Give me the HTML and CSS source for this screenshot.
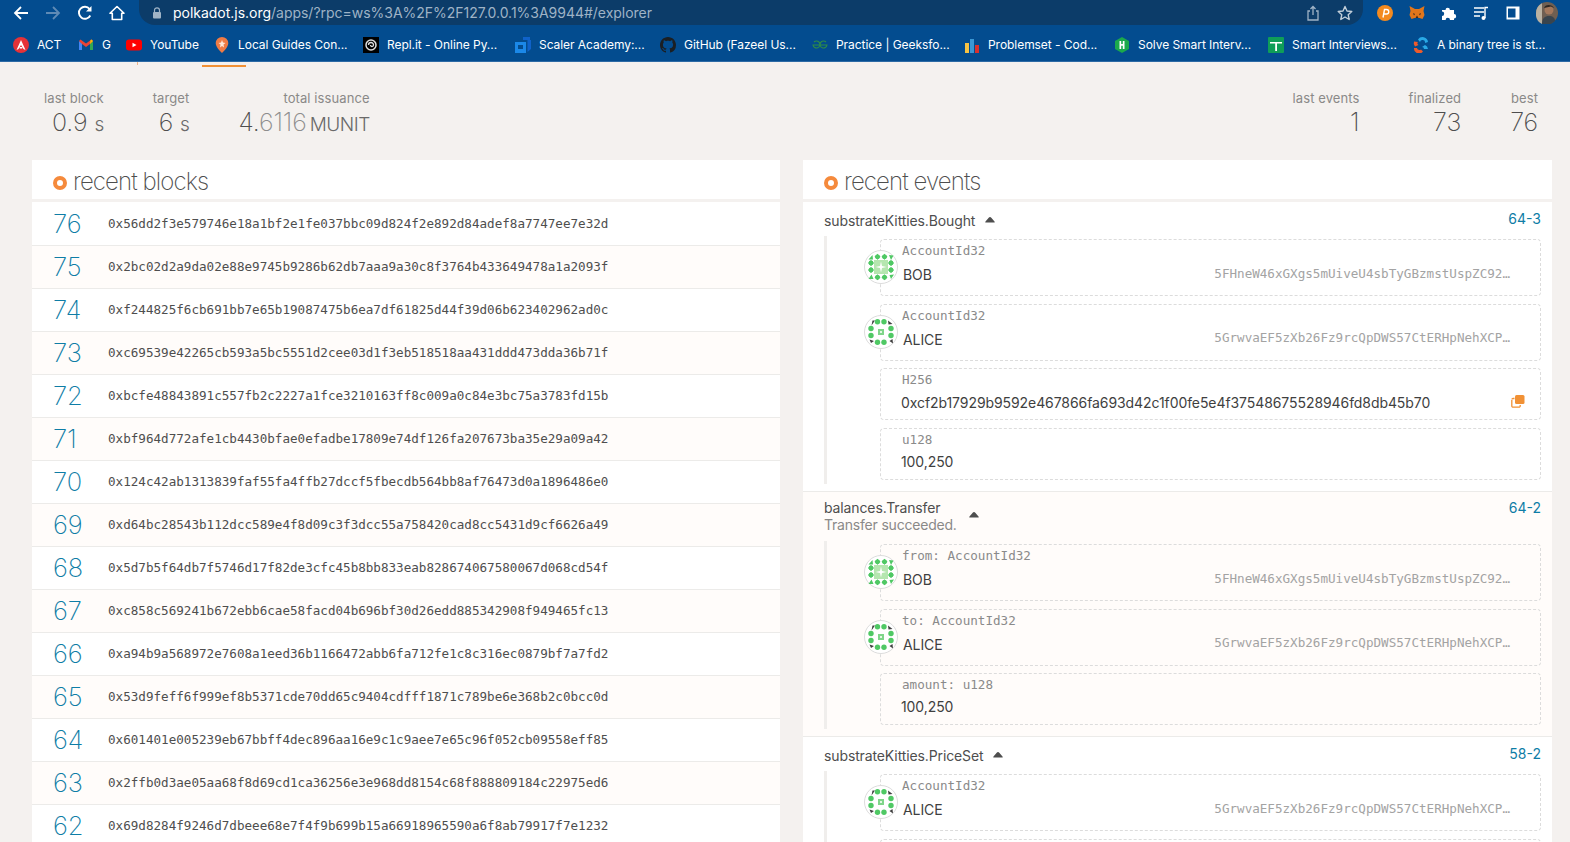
FILE: index.html
```html
<!DOCTYPE html>
<html lang="en">
<head>
<meta charset="utf-8">
<title>Polkadot/Substrate Portal</title>
<link rel="stylesheet" href="styles.css">
</head>
<body>
<svg class="defs" width="0" height="0" aria-hidden="true">
  <symbol id="bob" viewBox="0 0 34 34">
    <circle cx="17" cy="17" r="16.5" fill="#fff" stroke="#dcdcdc"/>
    <rect x="10" y="10" width="14" height="14" fill="#b5e6b0"/>
    <path d="M17 11.500l1 4.500 4.500 1-4.500 1-1 4.500-1-4.500-4.500-1 4.500-1z" fill="#fff"/>
    <g fill="#4fc864">
      <path d="M13.500 3.800l3 3-3 3-3-3zM20.500 3.800l3 3-3 3-3-3zM7 10l3 3-3 3-3-3zM7 17l3 3-3 3-3-3zM27 10l3 3-3 3-3-3zM27 17l3 3-3 3-3-3zM13.500 24.300l3 3-3 3-3-3zM20.500 24.300l3 3-3 3-3-3z"/>
      <circle cx="13.500" cy="6.800" r="2.400"/><circle cx="20.500" cy="6.800" r="2.400"/><circle cx="7" cy="13" r="2.400"/><circle cx="7" cy="20" r="2.400"/><circle cx="27" cy="13" r="2.400"/><circle cx="27" cy="20" r="2.400"/><circle cx="13.500" cy="27.300" r="2.400"/><circle cx="20.500" cy="27.300" r="2.400"/>
      <path d="M4.500 9.500l4-4.500.5 4.500zM25 5l4.500.5-2.500 4.500zM25.500 25l4.500-.5-3 4.500zM4.500 29l3-4.500 2 4.500z"/>
    </g>
  </symbol>
  <symbol id="alice" viewBox="0 0 34 34">
    <circle cx="17" cy="17" r="16.500" fill="#fff" stroke="#dcdcdc"/>
    <g fill="#3f3f3f"><path d="M8.500 5.500h2.500L7.500 10.500zM24 5.500l4.500 3.500-4 .5zM5.500 24.500l4.500 1.500-3 2zM25.500 26l3-2 .5 4.500z"/></g>
    <g fill="#4fc864">
      <circle cx="13.500" cy="6.800" r="2.700"/><circle cx="20" cy="6.800" r="2.700"/><circle cx="7" cy="13.500" r="2.700"/><circle cx="7" cy="20.500" r="2.700"/><circle cx="27" cy="13.500" r="2.700"/><circle cx="27" cy="20.500" r="2.700"/><circle cx="13.500" cy="27.200" r="2.700"/><circle cx="20" cy="27.200" r="2.700"/>
    </g>
    <rect x="14" y="14" width="6" height="6" fill="#7fd68a"/>
    <rect x="16" y="16" width="2" height="2" fill="#e4f7e6"/>
  </symbol>
  <symbol id="caret" viewBox="0 0 10 6"><path d="M5 0c.5 0 .9.300 1.300.800L9.500 4.400c.5.600.3 1.100-.4 1.100H.9c-.7 0-.9-.5-.4-1.100L3.700.8C4.100.3 4.500 0 5 0z" fill="#4e4e4e"/></symbol>
</svg>

<header class="chrome">
  <div class="toolbar">
    <div class="nav-buttons">
      <svg class="tb-icon" viewBox="0 0 16 16"><path d="M15 8H2M8 2L2 8l6 6" fill="none" stroke="#fff" stroke-width="1.800"/></svg>
      <svg class="tb-icon" viewBox="0 0 16 16"><path d="M1 8h13M8 2l6 6-6 6" fill="none" stroke="#5f8ab5" stroke-width="1.800"/></svg>
      <svg class="tb-icon" viewBox="0 0 16 16"><path d="M13.300 10.500A6 6 0 1 1 12.600 4" fill="none" stroke="#fff" stroke-width="1.900"/><path d="M14.500 1v5.500H9z" fill="#fff"/></svg>
      <svg class="tb-icon" viewBox="0 0 16 16"><path d="M8 1.500L1 8.300h2.300V14.500h9.400V8.300H15z" fill="none" stroke="#fff" stroke-width="1.600" stroke-linejoin="round"/></svg>
    </div>
    <div class="omnibox">
      <svg class="lock" viewBox="0 0 10 12"><path d="M2.500 5V3.300a2.500 2.500 0 0 1 5 0V5" fill="none" stroke="#9fb3c6" stroke-width="1.200"/><rect x="1" y="5" width="8" height="6.500" rx="1" fill="#9fb3c6"/></svg>
      <span class="url"><b class="url-host">polkadot.js.org</b>/apps/?rpc=ws%3A%2F%2F127.0.0.1%3A9944#/explorer</span>
      <svg class="omni-icon share" viewBox="0 0 14 16"><path d="M4 6H2v9h10V6h-2M7 10V1.500M4.500 4L7 1.500 9.500 4" fill="none" stroke="#9fb3c6" stroke-width="1.300"/></svg>
      <svg class="omni-icon" viewBox="0 0 16 16"><path d="M8 1.500l2 4.500 4.800.5-3.600 3.200 1 4.800L8 12l-4.200 2.500 1-4.800L1.200 6.500 6 6z" fill="none" stroke="#c3cfda" stroke-width="1.400" stroke-linejoin="round"/></svg>
    </div>
    <div class="extensions">
      <svg class="ext" viewBox="0 0 16 16"><circle cx="8" cy="8" r="8" fill="#f38a1f"/><path d="M6 12.500L7.500 4.500h2a2 2 0 0 1 0 4.500H7" fill="none" stroke="#fff" stroke-width="1.400"/></svg>
      <svg class="ext" viewBox="0 0 16 16"><path d="M.5 1L6 4h4l5.500-3-1 5 1 4-2 4-3-1H5.500l-3 1-2-4 1-4z" fill="#e2761b"/><path d="M4 8l2 1-1 1.500zM12 8l-2 1 1 1.500zM6.500 13h3L8 10.500z" fill="#3d2b1f"/></svg>
      <svg class="ext" viewBox="0 0 16 16"><path d="M1 5h3.500a2.200 2.200 0 1 1 4.400 0H13v4a2.200 2.200 0 1 1 0 4.400V15H9a2.200 2.200 0 1 0-4.400 0H1v-4a2.200 2.200 0 1 0 0-4.400z" fill="#fff"/></svg>
      <svg class="ext" viewBox="0 0 16 16"><path d="M1 3h10M1 7h10M1 11h6" stroke="#fff" stroke-width="1.400"/><path d="M12 13V2.500h3" fill="none" stroke="#fff" stroke-width="1.400"/><circle cx="10.500" cy="13" r="2" fill="#fff"/></svg>
      <svg class="ext" viewBox="0 0 16 16"><rect x="1.500" y="1.500" width="13" height="13" fill="#fff"/><rect x="3" y="3.500" width="7.500" height="9" fill="#034c8f"/></svg>
      <svg class="ext avatar" viewBox="0 0 22 22"><circle cx="11" cy="11" r="11" fill="#6f5f52"/><path d="M0 11a11 11 0 0 1 6-9.700V22A11 11 0 0 1 0 11z" fill="#b9b1a2"/><circle cx="13" cy="8" r="4.500" fill="#a4785c"/><path d="M8 6c1-4 8-4 10 0l-3-1.500z" fill="#2c2621"/><path d="M6 22c0-6 3-8 7-8s6 2 6 5l-4 3z" fill="#39444d"/></svg>
    </div>
  </div>
  <nav class="bookmarks">
    <a class="bm"><svg class="fav" viewBox="0 0 16 16"><circle cx="8" cy="8" r="8" fill="#e53238"/><path d="M8 3L3.500 13l2-1L8 8l2.500 4 2 1zM6.800 10h2.400v1.500H6.800z" fill="#fff"/></svg>ACT</a>
    <a class="bm"><svg class="fav" viewBox="0 0 16 16"><path d="M1 13V4l3 2v7z" fill="#4285f4"/><path d="M12 13V6l3-2v9z" fill="#34a853"/><path d="M1 4l1.500-1.500L8 6.500l5.500-4L15 4 12 7 8 10 4 7z" fill="#ea4335"/><path d="M12.500 3l1-.5L15 4l-3 3z" fill="#fbbc04"/></svg>G</a>
    <a class="bm"><svg class="fav" viewBox="0 0 16 16"><rect y="2.500" width="16" height="11" rx="3" fill="#f00"/><path d="M6.500 5.700L10.500 8l-4 2.300z" fill="#fff"/></svg>YouTube</a>
    <a class="bm"><svg class="fav" viewBox="0 0 16 16"><path d="M8 0a6.300 6.300 0 0 1 6.300 6.300C14.300 10.500 8 16 8 16S1.700 10.500 1.700 6.300A6.300 6.300 0 0 1 8 0z" fill="#ef7b45"/><path d="M8 3l1 2.500 2.500.5-2 1.500L10 10.500 8 9l-2 1.500.500-3-2-1.500 2.500-.5z" fill="#fde7d8"/></svg>Local Guides Con...</a>
    <a class="bm"><svg class="fav" viewBox="0 0 16 16"><rect width="16" height="16" fill="#000"/><circle cx="8" cy="8" r="5" fill="none" stroke="#ddd" stroke-width="1.500"/><path d="M5.500 8A2.500 2.500 0 0 1 10.500 8 1.500 1.500 0 0 1 7.500 8" fill="none" stroke="#ddd" stroke-width="1.300"/></svg>Repl.it - Online Py...</a>
    <a class="bm"><svg class="fav" viewBox="0 0 16 16"><path d="M8 0h7v3H8zM12.500 3H16v9l-3.500 3V3z" fill="#0f62c9"/><path d="M0 5h11v11H0z" fill="#1b88e8"/><path d="M3 8h5v4H3z" fill="#034c8f"/></svg>Scaler Academy:...</a>
    <a class="bm"><svg class="fav" viewBox="0 0 16 16"><path fill="#1b1f23" d="M8 0C3.580 0 0 3.580 0 8c0 3.540 2.290 6.530 5.470 7.590.4.070.55-.17.55-.38 0-.19-.01-.82-.01-1.490-2.010.37-2.530-.49-2.690-.94-.09-.23-.48-.94-.82-1.130-.28-.15-.68-.52-.01-.53.63-.01 1.080.58 1.230.82.72 1.210 1.870.87 2.330.66.07-.52.28-.87.51-1.070-1.780-.2-3.640-.89-3.640-3.950 0-.87.31-1.590.82-2.150-.08-.2-.36-1.020.08-2.120 0 0 .67-.21 2.200.82.64-.18 1.320-.27 2-.27s1.360.09 2 .27c1.530-1.040 2.200-.82 2.200-.82.44 1.100.16 1.920.08 2.120.51.56.82 1.270.82 2.150 0 3.070-1.870 3.750-3.650 3.950.29.25.54.73.54 1.480 0 1.070-.01 1.930-.01 2.200 0 .21.15.46.55.38A8.010 8.010 0 0 0 16 8c0-4.420-3.580-8-8-8z"/></svg>GitHub (Fazeel Us...</a>
    <a class="bm"><svg class="fav" viewBox="0 0 16 16"><path d="M8 8H15a3.500 3.500 0 1 1-1-3M8 8H1a3.500 3.500 0 1 0 1-3" fill="none" stroke="#2f8d46" stroke-width="1.100"/></svg>Practice | Geeksfo...</a>
    <a class="bm"><svg class="fav" viewBox="0 0 16 16"><rect x="1" y="6" width="4" height="10" fill="#f7c244"/><rect x="6" y="2" width="4" height="14" fill="#3a97d4"/><rect x="11" y="8" width="4" height="8" fill="#d7322e"/></svg>Problemset - Cod...</a>
    <a class="bm"><svg class="fav" viewBox="0 0 16 16"><path d="M8 0l7 4v8l-7 4-7-4V4z" fill="#1ba94c"/><path d="M5.500 4h1.700v3h1.600V4h1.700v8H8.800V8.700H7.200V12H5.500z" fill="#fff"/></svg>Solve Smart Interv...</a>
    <a class="bm"><svg class="fav" viewBox="0 0 16 16"><rect width="16" height="16" rx="1" fill="#0f9d58"/><path d="M2 5h12v1.500H9V14H7.200V6.500H2z" fill="#fff"/></svg>Smart Interviews...</a>
    <a class="bm"><svg class="fav" viewBox="0 0 16 16"><path d="M5 2.500A5.500 5.500 0 0 1 15 5l-3 1a2.500 2.500 0 0 0-5-1z" fill="#29a9e6"/><path d="M12 8a5 5 0 0 1 3 4l-4 0a2 2 0 0 0-2-2z" fill="#29a9e6"/><path d="M1 4.500a5 5 0 0 0 1 5L5.500 8A2 2 0 0 1 5 5z" fill="#ef5b2b"/><path d="M1 11a5 5 0 0 0 9 3.500L8 12.500a2.500 2.500 0 0 1-4-1.500z" fill="#ef5b2b"/></svg>A binary tree is st...</a>
  </nav>
</header>

<div class="tabbar"><span class="tab-tick"></span><span class="tab-underline"></span></div>

<main class="page">
  <section class="summary">
    <div class="stat-group">
      <div class="stat"><div class="stat-label">last block</div><div class="stat-value">0.9 <small>s</small></div></div>
      <div class="stat"><div class="stat-label">target</div><div class="stat-value">6 <small>s</small></div></div>
      <div class="stat"><div class="stat-label">total issuance</div><div class="stat-value">4.<span class="faint">6116</span> <small>MUNIT</small></div></div>
    </div>
    <div class="stat-group">
      <div class="stat"><div class="stat-label">last events</div><div class="stat-value">1</div></div>
      <div class="stat"><div class="stat-label">finalized</div><div class="stat-value">73</div></div>
      <div class="stat"><div class="stat-label">best</div><div class="stat-value">76</div></div>
    </div>
  </section>

  <div class="columns">
    <section class="column">
      <h2 class="card-title"><span class="dot"></span>recent blocks</h2>
      <table class="blocks">
        <tr><td class="num">76</td><td class="hash">0x56dd2f3e579746e18a1bf2e1fe037bbc09d824f2e892d84adef8a7747ee7e32d</td></tr>
        <tr><td class="num">75</td><td class="hash">0x2bc02d2a9da02e88e9745b9286b62db7aaa9a30c8f3764b433649478a1a2093f</td></tr>
        <tr><td class="num">74</td><td class="hash">0xf244825f6cb691bb7e65b19087475b6ea7df61825d44f39d06b623402962ad0c</td></tr>
        <tr><td class="num">73</td><td class="hash">0xc69539e42265cb593a5bc5551d2cee03d1f3eb518518aa431ddd473dda36b71f</td></tr>
        <tr><td class="num">72</td><td class="hash">0xbcfe48843891c557fb2c2227a1fce3210163ff8c009a0c84e3bc75a3783fd15b</td></tr>
        <tr><td class="num">71</td><td class="hash">0xbf964d772afe1cb4430bfae0efadbe17809e74df126fa207673ba35e29a09a42</td></tr>
        <tr><td class="num">70</td><td class="hash">0x124c42ab1313839faf55fa4ffb27dccf5fbecdb564bb8af76473d0a1896486e0</td></tr>
        <tr><td class="num">69</td><td class="hash">0xd64bc28543b112dcc589e4f8d09c3f3dcc55a758420cad8cc5431d9cf6626a49</td></tr>
        <tr><td class="num">68</td><td class="hash">0x5d7b5f64db7f5746d17f82de3cfc45b8bb833eab828674067580067d068cd54f</td></tr>
        <tr><td class="num">67</td><td class="hash">0xc858c569241b672ebb6cae58facd04b696bf30d26edd885342908f949465fc13</td></tr>
        <tr><td class="num">66</td><td class="hash">0xa94b9a568972e7608a1eed36b1166472abb6fa712fe1c8c316ec0879bf7a7fd2</td></tr>
        <tr><td class="num">65</td><td class="hash">0x53d9feff6f999ef8b5371cde70dd65c9404cdfff1871c789be6e368b2c0bcc0d</td></tr>
        <tr><td class="num">64</td><td class="hash">0x601401e005239eb67bbff4dec896aa16e9c1c9aee7e65c96f052cb09558eff85</td></tr>
        <tr><td class="num">63</td><td class="hash">0x2ffb0d3ae05aa68f8d69cd1ca36256e3e968dd8154c68f888809184c22975ed6</td></tr>
        <tr><td class="num">62</td><td class="hash">0x69d8284f9246d7dbeee68e7f4f9b699b15a66918965590a6f8ab79917f7e1232</td></tr>
      </table>
    </section>

    <section class="column">
      <h2 class="card-title"><span class="dot"></span>recent events</h2>
      <div class="events">
        <article class="event">
          <div class="event-head">
            <div class="event-name">substrateKitties.Bought</div>
            <svg class="caret"><use href="#caret"/></svg>
            <a class="event-id">64-3</a>
          </div>
          <div class="params">
            <div class="param addr">
              <svg class="identicon"><use href="#bob"/></svg>
              <div class="param-label">AccountId32</div>
              <div class="param-row"><span class="param-value">BOB</span><span class="address">5FHneW46xGXgs5mUiveU4sbTyGBzmstUspZC92…</span></div>
            </div>
            <div class="param addr">
              <svg class="identicon"><use href="#alice"/></svg>
              <div class="param-label">AccountId32</div>
              <div class="param-row"><span class="param-value">ALICE</span><span class="address">5GrwvaEF5zXb26Fz9rcQpDWS57CtERHpNehXCP…</span></div>
            </div>
            <div class="param">
              <div class="param-label">H256</div>
              <div class="param-row hash-row">
                <span class="param-value">0xcf2b17929b9592e467866fa693d42c1f00fe5e4f37548675528946fd8db45b70</span>
                <svg class="copy" viewBox="0 0 14 14"><path d="M1 5.500A1 1 0 0 1 2 4.500h1.500M.8 6v6A1.200 1.200 0 0 0 2 13.200h6A1.200 1.200 0 0 0 9.200 12v-1" fill="none" stroke="#f19135" stroke-width="1.300"/><rect x="4" y="1" width="9.500" height="9" rx="1.500" fill="#f19135"/></svg>
              </div>
            </div>
            <div class="param">
              <div class="param-label">u128</div>
              <div class="param-row"><span class="param-value">100,250</span></div>
            </div>
          </div>
        </article>

        <article class="event">
          <div class="event-head with-desc">
            <div class="event-name">balances.Transfer<div class="event-desc">Transfer succeeded.</div></div>
            <svg class="caret"><use href="#caret"/></svg>
            <a class="event-id">64-2</a>
          </div>
          <div class="params">
            <div class="param addr">
              <svg class="identicon"><use href="#bob"/></svg>
              <div class="param-label">from: AccountId32</div>
              <div class="param-row"><span class="param-value">BOB</span><span class="address">5FHneW46xGXgs5mUiveU4sbTyGBzmstUspZC92…</span></div>
            </div>
            <div class="param addr">
              <svg class="identicon"><use href="#alice"/></svg>
              <div class="param-label">to: AccountId32</div>
              <div class="param-row"><span class="param-value">ALICE</span><span class="address">5GrwvaEF5zXb26Fz9rcQpDWS57CtERHpNehXCP…</span></div>
            </div>
            <div class="param">
              <div class="param-label">amount: u128</div>
              <div class="param-row"><span class="param-value">100,250</span></div>
            </div>
          </div>
        </article>

        <article class="event">
          <div class="event-head">
            <div class="event-name">substrateKitties.PriceSet</div>
            <svg class="caret"><use href="#caret"/></svg>
            <a class="event-id">58-2</a>
          </div>
          <div class="params">
            <div class="param addr">
              <svg class="identicon"><use href="#alice"/></svg>
              <div class="param-label">AccountId32</div>
              <div class="param-row"><span class="param-value">ALICE</span><span class="address">5GrwvaEF5zXb26Fz9rcQpDWS57CtERHpNehXCP…</span></div>
            </div>
            <div class="param addr"></div>
          </div>
        </article>
      </div>
    </section>
  </div>
</main>
</body>
</html>
```

FILE: styles.css
```css
* { box-sizing: border-box; }
html, body { margin: 0; height: 842px; overflow: hidden; }
body { background: #f4f1ef; font-family: Inter, "Liberation Sans", sans-serif; color: #4e4e4e; }
.defs { position: absolute; }

.chrome { background: #034c8f; height: 62px; border-bottom: 1px solid #2c6aa5; }
.toolbar { display: flex; height: 25px; overflow: hidden; }
.nav-buttons { display: flex; width: 139px; padding-left: 13px; gap: 16px; align-items: center; }
.tb-icon { width: 16px; height: 16px; flex: none; }
.omnibox { display: flex; align-items: center; width: 1224px; height: 25px; background: #0c3c69; border-radius: 0 0 16px 16px; padding-left: 13px; }
.lock { width: 10px; height: 12px; margin-right: 11px; }
.url { flex: 1; font-size: 14px; color: #9fb3c6; white-space: nowrap; letter-spacing: -.02px; }
.url-host { font-weight: 400; color: #fff; }
.omni-icon { width: 16px; height: 16px; margin-right: 10px; }
.omni-icon.share { width: 14px; margin-right: 17px; }
.extensions { display: flex; align-items: center; padding-left: 14px; gap: 16px; }
.ext { width: 16px; height: 16px; flex: none; }
.avatar { width: 22px; height: 22px; margin-left: -1px; }

.bookmarks { display: grid; grid-template-columns: 65px 48px 88px 149px 152px 145px 152px 152px 150px 154px 145px 150px; padding: 3px 0 0 13px; height: 36px; align-items: center; }
.bm { display: flex; align-items: center; color: #fff; font-size: 12px; white-space: nowrap; line-height: 16px; letter-spacing: -.05px; }
.fav { width: 16px; height: 16px; margin-right: 8px; flex: none; }

.tabbar { display: flex; height: 5px; }
.tab-tick { width: 1px; height: 3px; margin-left: 137px; background: #eeb58a; }
.tab-underline { width: 44px; height: 2px; margin: 3px 0 0 64px; background: #f19135; }

.page { padding: 0 18px 0 32px; }
.summary { display: flex; justify-content: space-between; height: 93px; padding: 23px 14px 0 12px; }
.stat-group { display: flex; gap: 49px; }
.stat { text-align: right; }
.stat-label { font-size: 13px; line-height: 16px; color: #8a8988; letter-spacing: .1px; }
.stat-value { font-size: 25px; line-height: 32px; font-weight: 200; color: #4e4e4e; letter-spacing: -.1px; }
.stat-value small { font-size: 19px; font-weight: 300; letter-spacing: -.5px; color: #6a6a6a; }
.stat-value .faint + small { margin-left: -4px; }
.faint { color: #8d8d8d; }

.columns { display: grid; grid-template-columns: 748px 1fr; gap: 23px; }
.card-title { display: flex; align-items: center; height: 39px; margin: 0 0 3px; padding: 3px 0 0 21px; background: #fff; font-size: 24px; font-weight: 200; color: #4e4e4e; letter-spacing: -.9px; }
.dot { width: 14px; height: 14px; margin: 4px 6px 0 0; border: 4px solid #f58a3c; border-radius: 50%; background: #fff; flex: none; }

.blocks { width: 100%; border-collapse: collapse; }
.blocks tr { height: 43px; background: #fff; border-bottom: 1px solid #ecebe9; }
.blocks tr:nth-child(even) { background: #fffcfa; }
.num { width: 76px; padding: 0 0 0 21px; font-size: 25.5px; font-weight: 200; color: #0e7da6; }
.hash { padding: 0; font-family: "DejaVu Sans Mono", monospace; font-size: 12.6px; color: #4e4e4e; }

.event { background: #fff; border-bottom: 1px solid #ecebe9; padding: 9px 11px 7px 21px; }
.event:nth-child(even) { background: #fffcfa; }
.event-head { display: flex; align-items: center; min-height: 19px; margin-bottom: 6px; }
.event-head.with-desc { margin: -2px 0 8px; }
.event-name { font-size: 14px; line-height: 17px; color: #4e4e4e; letter-spacing: -.12px; }
.event-desc { color: #8a8988; letter-spacing: -.2px; }
.caret { width: 10px; height: 6px; margin: -2px 0 0 10px; flex: none; }
.with-desc .caret { margin-left: 12px; }
.event-id { margin: -1px 0 0 auto; font-size: 14px; color: #0e7da6; align-self: flex-start; }
.with-desc .event-id { margin-top: 0; }
.params { border-left: 3px solid #f0eeec; padding: 3px 0 4px 53px; }
.param { position: relative; height: 52px; margin-bottom: 8px; padding: 3px 0 0 20px; border: 1px dashed #dcdcdc; border-radius: 4px; }
.param:last-child { margin-bottom: 0; }
.param.addr { height: 57px; margin-bottom: 7.500px; }
.identicon { position: absolute; left: -17.500px; top: 10px; width: 34px; height: 34px; }
.param-label { margin-left: 1px; font-family: "DejaVu Sans Mono", monospace; font-size: 12.6px; line-height: 16px; color: #8a8a8a; }
.param-row { display: flex; justify-content: space-between; align-items: center; margin-top: 5px; font-size: 14px; line-height: 17px; }
.addr .param-row { margin-top: 7px; }
.hash-row.param-row { margin-top: 6px; }
.param-value { color: #3f3f3f; letter-spacing: -.08px; }
.addr .param-value { margin-left: 2px; }
.address { margin: -3px 30px 0 0; white-space: nowrap; font-family: "DejaVu Sans Mono", monospace; font-size: 12.6px; color: #a3a3a3; }
.copy { width: 14px; height: 14px; margin: -4px 15px 0 0; flex: none; }
```
